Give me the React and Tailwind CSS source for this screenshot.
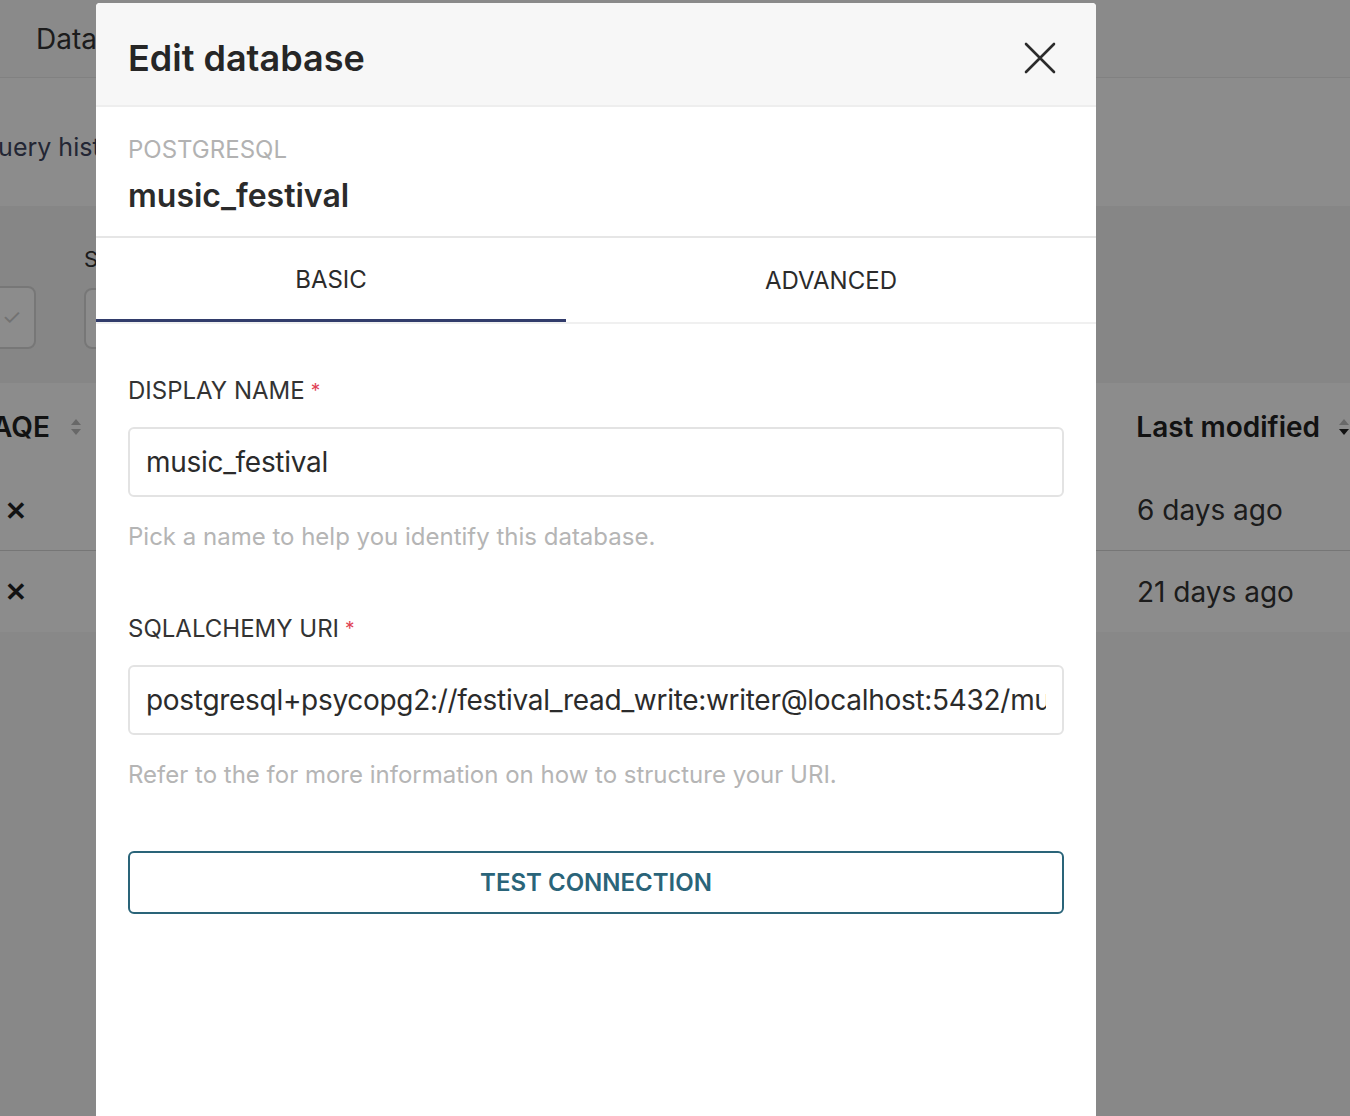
import React from "react";

function SortIcon({ active }) {
  return (
    <svg width="12" height="18" viewBox="0 0 12 18" className="shrink-0">
      <path d="M6 1 L11 7 L1 7 Z" fill="#bdbdbd" />
      <path d="M6 17 L11 11 L1 11 Z" fill={active ? "#222" : "#bdbdbd"} />
    </svg>
  );
}

function CloseIcon() {
  return (
    <svg width="32" height="32" viewBox="0 0 32 32">
      <path d="M2 2 L30 30 M30 2 L2 30" stroke="#2b2b2b" strokeWidth="2.6" strokeLinecap="round" />
    </svg>
  );
}

function Field({ label, value, help }) {
  return (
    <div>
      <div className="flex items-center text-[24px] leading-[26px] text-[#333]">
        {label}
        <span className="ml-[6px] text-[#e04355] text-[19px]">*</span>
      </div>
      <div className="mt-[23px] h-[70px] rounded-[6px] border-2 border-[#e3e3e3] px-[16px] flex items-center">
        <div className="overflow-hidden w-full">
          <span className="text-[28px] text-[#2b2b2b] whitespace-nowrap tracking-[-0.3px]">{value}</span>
        </div>
      </div>
      <p className="mt-[27px] text-[24px] leading-[26px] text-[#b5b5b5]">{help}</p>
    </div>
  );
}

export default function App() {
  return (
    <div className="relative h-screen overflow-hidden bg-[#f8f8f8] font-['Inter',sans-serif]">
      {/* page under the overlay */}
      <div className="h-[78px] bg-[#fcfcfc] border-b border-[#ececec] flex items-center pl-[36px]">
        <span className="text-[28px] text-[#333]">Databases</span>
      </div>
      <div className="h-[128px] bg-white flex items-center -ml-[21px]">
        <span className="text-[25px] text-[#404660] mb-[-12px]">Query history</span>
      </div>
      <div className="h-[177px] bg-[#f4f4f4] flex items-end gap-[48px] pb-[34px] -ml-[40px]">
        <div className="w-[76px] h-[63px] rounded-[8px] border-2 border-[#d9d9d9] bg-white flex items-center pl-[40px] text-[#cfcfcf] text-[22px]">
          ✓
        </div>
        <div className="flex flex-col">
          <span className="text-[22px] text-[#333] mb-[12px]">Search</span>
          <div className="w-[300px] h-[61px] rounded-[8px] border-2 border-[#d9d9d9] bg-white" />
        </div>
      </div>
      <div className="bg-white">
        <div className="h-[87px] flex items-center">
          <div className="w-[1145px] -ml-[8px] flex items-center gap-[20px]">
            <span className="text-[28px] font-semibold text-[#222]">AQE</span>
            <SortIcon />
          </div>
          <div className="flex items-center gap-[18px]">
            <span className="text-[28px] font-semibold text-[#222] whitespace-nowrap">Last modified</span>
            <SortIcon active />
          </div>
        </div>
        {["6 days ago", "21 days ago"].map((d, i) => (
          <div key={i} className={"h-[81px] flex items-center " + (i === 0 ? "border-b border-[#d8d8d8]" : "")}>
            <div className="w-[1137px] pl-[5px]">
              <span className="text-[26px] font-bold text-[#222]">✕</span>
            </div>
            <span className="text-[28px] text-[#333] whitespace-nowrap">{d}</span>
          </div>
        ))}
      </div>

      {/* overlay */}
      <div className="absolute inset-0 bg-black/45" />

      {/* modal */}
      <div className="absolute left-[96px] top-[3px] w-[1000px] bottom-[-40px] bg-white rounded-t-[4px] flex flex-col">
        <div className="h-[104px] bg-[#f7f7f7] border-b-2 border-[#eeeeee] rounded-t-[4px] flex items-center justify-between pl-[32px] pr-[40px] pt-[8px]">
          <h2 className="text-[36px] font-semibold text-[#262626]">Edit database</h2>
          <CloseIcon />
        </div>
        <div className="pl-[32px] pt-[30px] pb-[22px] border-b-2 border-[#e6e6e6]">
          <div className="text-[24px] leading-[26px] text-[#b2b2b2]">POSTGRESQL</div>
          <div className="mt-[15px] text-[32px] leading-[36px] font-semibold text-[#2b2b2b]">music_festival</div>
        </div>
        <div className="flex border-b-2 border-[#f0f0f0]">
          <div className="w-[470px] h-[84px] flex items-center justify-center border-b-[3px] border-[#323c6b] -mb-[2px] pt-[3px]">
            <span className="text-[24px] text-[#2b2b2b]">BASIC</span>
          </div>
          <div className="flex-1 h-[84px] flex items-center justify-center pt-[2px]">
            <span className="text-[24px] text-[#2b2b2b]">ADVANCED</span>
          </div>
        </div>
        <div className="px-[32px] pt-[54px]">
          <Field
            label="DISPLAY NAME"
            value="music_festival"
            help="Pick a name to help you identify this database."
          />
          <div className="mt-[66px]">
            <Field
              label="SQLALCHEMY URI"
              value="postgresql+psycopg2://festival_read_write:writer@localhost:5432/music_festival"
              help="Refer to the for more information on how to structure your URI."
            />
          </div>
          <button className="mt-[63px] w-full h-[63px] rounded-[6px] border-2 border-[#2a6479] text-[24px] font-semibold text-[#2a6479]">
            TEST CONNECTION
          </button>
        </div>
      </div>
    </div>
  );
}
